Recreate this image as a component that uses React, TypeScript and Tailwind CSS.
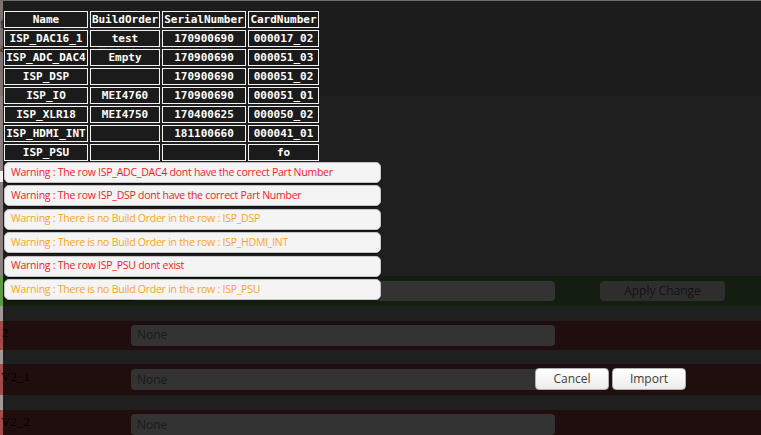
import React from "react";

const rows: string[][] = [
  ["ISP_DAC16_1", "test", "170900690", "000017_02"],
  ["ISP_ADC_DAC4", "Empty", "170900690", "000051_03"],
  ["ISP_DSP", "", "170900690", "000051_02"],
  ["ISP_IO", "MEI4760", "170900690", "000051_01"],
  ["ISP_XLR18", "MEI4750", "170400625", "000050_02"],
  ["ISP_HDMI_INT", "", "181100660", "000041_01"],
  ["ISP_PSU", "", "", "fo"],
];

const warnings: { text: string; red: boolean }[] = [
  { text: "Warning : The row ISP_ADC_DAC4 dont have the correct Part Number", red: true },
  { text: "Warning : The row ISP_DSP dont have the correct Part Number", red: true },
  { text: "Warning : There is no Build Order in the row : ISP_DSP", red: false },
  { text: "Warning : There is no Build Order in the row : ISP_HDMI_INT", red: false },
  { text: "Warning : The row ISP_PSU dont exist", red: true },
  { text: "Warning : There is no Build Order in the row : ISP_PSU", red: false },
];

const widths = ["w-[84px]", "w-[70px]", "w-[84px]", "w-[71px]"];

function Cell({ text, i }: { text: string; i: number }) {
  return (
    <div
      className={`${widths[i]} h-[17px] border border-[#f2f2f2] bg-[#1b1b1b] flex items-center justify-center text-white font-bold text-[11px] leading-none font-['DejaVu_Sans_Mono',monospace] whitespace-nowrap`}
    >
      {text}
    </div>
  );
}

function InputBox({ text }: { text: string }) {
  return (
    <div className="w-[424px] h-[21px] rounded-[4px] bg-[#333333] flex items-center pl-[6px] text-[12px] text-[#1a1a1a] font-['Open_Sans',sans-serif]">
      {text}
    </div>
  );
}

export default function App() {
  return (
    <div className="relative w-[761px] h-[435px] overflow-hidden bg-[#1c1c1c] font-['Liberation_Sans',sans-serif]">
      {/* background application */}
      <div className="flex flex-col h-full">
        <div className="h-px bg-[#6b6b6b]" />
        <div className="flex h-[96px]">
          <div className="w-[3px] bg-[#7c7272]" />
          <div className="flex-1 bg-[#1c1c1c] flex flex-col pt-[13px] gap-[4px] font-['Liberation_Serif',serif] text-[13px] text-[#2a1612]">
            <div className="flex items-center h-[20px] -ml-[3px]">
              <span className="w-[64px] whitespace-nowrap overflow-hidden">formation :</span>
              <div className="w-[150px] h-[20px] rounded-[4px] bg-[#2a2a2a] pl-[6px] text-[#141414]">ALL-DCI</div>
            </div>
            <div className="flex items-center h-[20px] -ml-[3px]">
              <span className="w-[98px] whitespace-nowrap overflow-hidden">ard information :</span>
              <div className="w-[130px] h-[20px] rounded-[4px] bg-[#2a2a2a] pl-[6px] text-[#141414]">17200950_000043_00_2</div>
            </div>
          </div>
        </div>
        <div className="flex h-[181px]">
          <div className="w-[3px] flex flex-col">
            <div className="h-[75px] bg-[#8a7f7f]" />
            <div className="h-[11px] bg-[#f0f0f0]" />
            <div className="flex-1 bg-[#8a7f7f]" />
          </div>
          <div className="flex-1 bg-[#1f1f1f]" />
        </div>
        {/* green row */}
        <div className="flex h-[30px]">
          <div className="w-[3px] bg-[#5c9b41]" />
          <div className="flex-1 bg-[#131d10] flex items-start pt-[5px]">
            <div className="w-[128px] text-[13px] text-black font-['Liberation_Serif',serif] leading-[16px]">1</div>
            <div className="w-[424px] h-[20px] rounded-[4px] bg-[#333333]" />
            <div className="ml-[45px] w-[125px] h-[20px] rounded-[4px] bg-[#2e2e2e] flex items-center justify-center text-[12px] text-[#121212] font-['Open_Sans',sans-serif]">
              Apply Change
            </div>
          </div>
        </div>
        <div className="flex h-[15px]">
          <div className="w-[3px] bg-[#a09797]" />
          <div className="flex-1 bg-[#1f1f1f]" />
        </div>
        <div className="flex h-[30px]">
          <div className="w-[3px] bg-[#a34a4a]" />
          <div className="flex-1 bg-[#200e0e] flex items-start pt-[4px]">
            <div className="w-[129px] -ml-[1px] text-[13px] text-black font-['Liberation_Serif',serif] leading-[16px]">2</div>
            <InputBox text="None" />
          </div>
        </div>
        <div className="flex h-[14px]">
          <div className="w-[3px] bg-[#a09797]" />
          <div className="flex-1 bg-[#1f1f1f]" />
        </div>
        <div className="flex h-[31px]">
          <div className="w-[3px] bg-[#a34a4a]" />
          <div className="flex-1 bg-[#200e0e] flex items-start pt-[5px]">
            <div className="w-[130px] -ml-[2px] text-[13px] text-black font-['Liberation_Serif',serif] leading-[16px]">V2_1</div>
            <InputBox text="None" />
          </div>
        </div>
        <div className="flex h-[15px]">
          <div className="w-[3px] bg-[#a09797]" />
          <div className="flex-1 bg-[#1f1f1f]" />
        </div>
        <div className="flex flex-1">
          <div className="w-[3px] bg-[#a34a4a]" />
          <div className="flex-1 bg-[#200e0e] flex items-start pt-[4px]">
            <div className="w-[130px] -ml-[2px] text-[13px] text-black font-['Liberation_Serif',serif] leading-[16px]">V2_2</div>
            <InputBox text="None" />
          </div>
        </div>
      </div>

      {/* overlay: table + warnings */}
      <div className="absolute left-[4px] top-[11px] flex flex-col">
        <div className="flex flex-col gap-[2px]">
          <div className="flex gap-[2px]">
            {["Name", "BuildOrder", "SerialNumber", "CardNumber"].map((h, i) => (
              <Cell key={h} text={h} i={i} />
            ))}
          </div>
          {rows.map((r, ri) => (
            <div key={ri} className="flex gap-[2px]">
              {r.map((c, i) => (
                <Cell key={i} text={c} i={i} />
              ))}
            </div>
          ))}
        </div>
        <div className="mt-[1px] flex flex-col gap-[2.4px]">
          {warnings.map((w, i) => (
            <div
              key={i}
              className={`w-[377px] h-[21px] rounded-[5px] bg-[#f4f4f4] border border-[#c4c4c4] shadow-[0_1px_1px_rgba(0,0,0,0.6)] flex items-center pl-[6px] text-[10.5px] tracking-[-0.25px] whitespace-nowrap font-['Open_Sans',sans-serif] ${
                w.red ? "text-[#f41c1c]" : "text-[#fba51b]"
              }`}
            >
              {w.text}
            </div>
          ))}
        </div>
      </div>

      {/* dialog buttons */}
      <div className="absolute left-[535px] top-[368px] flex gap-[3px]">
        {["Cancel", "Import"].map((b) => (
          <div
            key={b}
            className="w-[74px] h-[22px] rounded-[4px] border border-[#b0b0b0] bg-gradient-to-b from-white to-[#ececec] flex items-center justify-center text-[12px] text-[#3c3c3c] font-['Open_Sans',sans-serif]"
          >
            {b}
          </div>
        ))}
      </div>
    </div>
  );
}
